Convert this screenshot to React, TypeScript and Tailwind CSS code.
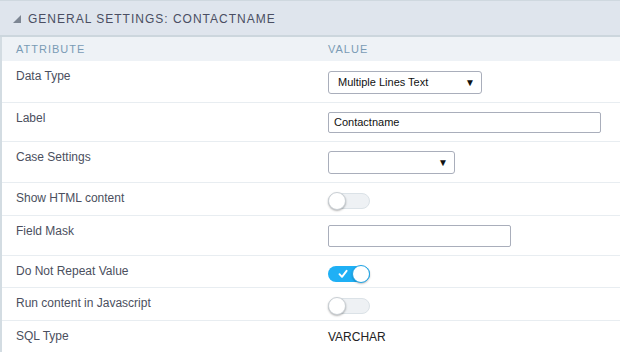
import React from "react";

const font = { fontFamily: '"Liberation Sans", Arial, sans-serif' };

function Toggle({ on }: { on: boolean }) {
  if (on) {
    return (
      <div className="relative w-[42px] h-[16px] rounded-full bg-[#1fb0f5]">
        <svg className="absolute left-[10px] top-[3px]" width="10" height="10" viewBox="0 0 10 10">
          <path d="M1.5 5.2 L4 7.8 L8.6 1.8" fill="none" stroke="#ffffff" strokeWidth="1.9" strokeLinecap="round" strokeLinejoin="round" />
        </svg>
        <div className="absolute right-[0px] top-[-1px] w-[18px] h-[18px] rounded-full bg-white border border-[#1fa4e6] shadow-[0_1px_2px_rgba(0,0,0,0.25)]" />
      </div>
    );
  }
  return (
    <div className="relative w-[42px] h-[16px] rounded-full bg-[#eef1f4] border border-[#dbe2e7]">
      <div className="absolute left-[-1px] top-[-2px] w-[18px] h-[18px] rounded-full bg-white border border-[#c9cfd4] shadow-[0_1px_2px_rgba(0,0,0,0.3)]" />
    </div>
  );
}

function Select({ text, width }: { text: string; width: number }) {
  return (
    <div
      className="flex items-center justify-between h-[23px] border border-[#a9aebb] rounded-[3px] bg-white pl-[9px] pr-[6px] text-[11px] text-[#111]"
      style={{ width }}
    >
      <span>{text}</span>
      <span className="text-[10px] leading-none text-[#111]">▼</span>
    </div>
  );
}

function Input({ text, width, h }: { text: string; width: number; h: number }) {
  return (
    <div
      className="flex items-center border border-[#a9aebb] rounded-[2px] bg-white pl-[5px] text-[11px] text-[#111]"
      style={{ width, height: h }}
    >
      {text}
    </div>
  );
}

type Row = { label: string; h: number; value: React.ReactNode };

const rows: Row[] = [
  { label: "Data Type", h: 42, value: <div className="pt-[1px]"><Select text="Multiple Lines Text" width={154} /></div> },
  { label: "Label", h: 39, value: <Input text="Contactname" width={273} h={21} /> },
  { label: "Case Settings", h: 41, value: <Select text="" width={127} /> },
  { label: "Show HTML content", h: 33, value: <div className="pt-[1px]"><Toggle on={false} /></div> },
  { label: "Field Mask", h: 40, value: <Input text="" width={183} h={22} /> },
  { label: "Do Not Repeat Value", h: 32, value: <div className="pt-[1px]"><Toggle on={true} /></div> },
  { label: "Run content in Javascript", h: 33, value: <div className="pt-[1px]"><Toggle on={false} /></div> },
  { label: "SQL Type", h: 32, value: <div className="text-[12px] leading-[14px] pt-[0px] text-[#222]">VARCHAR</div> },
];

export default function App() {
  return (
    <div className="w-[620px] h-[352px] overflow-hidden bg-white" style={font}>
      <div className="h-[37px] bg-[#dfe5ed] border-t border-t-[#cfd8df] border-b-2 border-b-[#ccd6dd] flex items-center">
        <svg className="ml-[13px] mt-[1px]" width="8" height="8" viewBox="0 0 8 8">
          <polygon points="8,0 8,8 0,8" fill="#7d8693" />
        </svg>
        <span className="ml-[7px] text-[12px] tracking-[1px] text-[#4a4e62] leading-none pt-[1px]">
          GENERAL SETTINGS: CONTACTNAME
        </span>
      </div>
      <div className="border-l-2 border-l-[#d3dce2]">
        <div className="grid grid-cols-[310px_1fr] h-[24px] bg-[#eef2f6] items-center text-[11px] tracking-[1px] text-[#7a9bb5]">
          <div className="pl-[14px]">ATTRIBUTE</div>
          <div className="pl-[16px]">VALUE</div>
        </div>
        {rows.map((r) => (
          <div
            key={r.label}
            className="grid grid-cols-[310px_1fr] border-b border-b-[#e8edf1]"
            style={{ height: r.h }}
          >
            <div className="pl-[14px] pt-[8px] text-[12px] leading-[14px] text-[#4b4f5e]">{r.label}</div>
            <div className="pl-[16px] pt-[9px]">{r.value}</div>
          </div>
        ))}
      </div>
    </div>
  );
}
